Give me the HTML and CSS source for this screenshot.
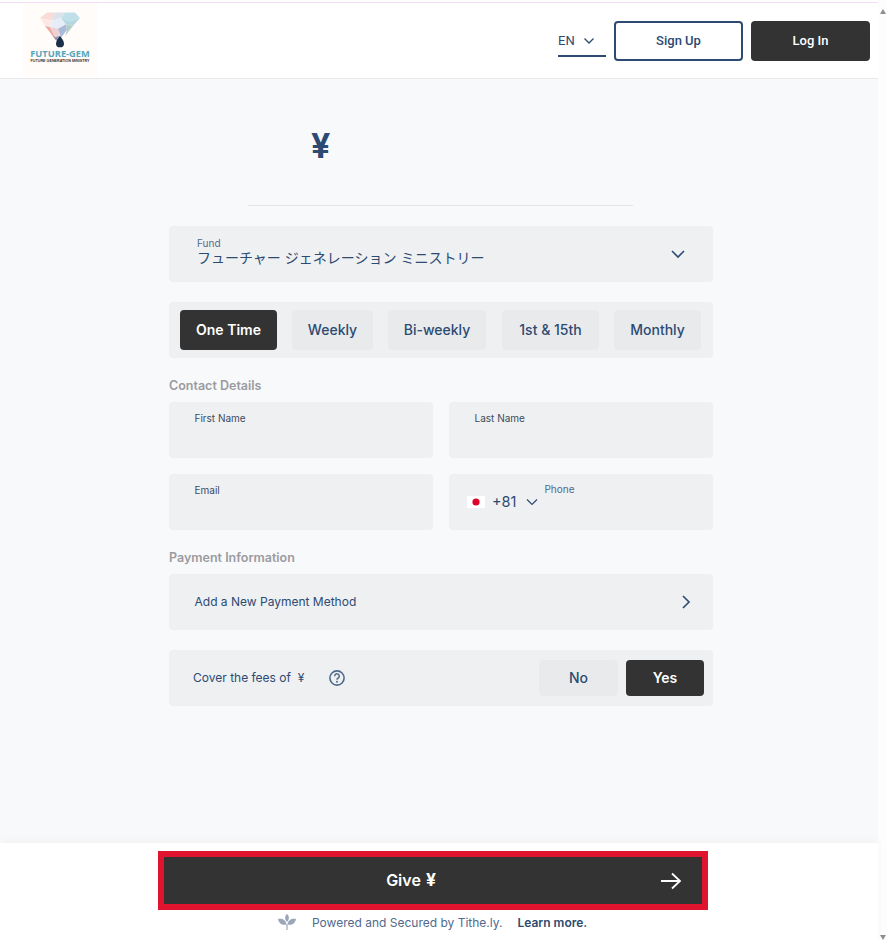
FILE: index.html
```html
<!DOCTYPE html>
<html lang="en">

<head>
    <meta charset="UTF-8">
    <meta name="viewport" content="width=device-width, initial-scale=1.0">
    <title>Give</title>
    <link rel="stylesheet" href="styles.css">
</head>

<body>
    <div class="page">
        <header class="topbar">
            <svg class="logo" width="75" height="74" viewBox="0 0 75 74">
                <rect width="75" height="74" fill="#fffcfa"/>
                <g class="logo-gem" transform="translate(0 1.500) scale(1 .9)">
                    <polygon points="17,15 24,9 32,9 29,18" fill="#f9dcd8"/>
                    <polygon points="32,9 42,9 38,15 29,18" fill="#dbe2ea"/>
                    <polygon points="42,9 52,9 57,15 47,19 38,15" fill="#bfe0e9"/>
                    <polygon points="17,15 29,18 27,25 22,24" fill="#fde8e5"/>
                    <polygon points="29,18 38,15 43,22 35,27 27,25" fill="#e7edf6"/>
                    <polygon points="38,15 47,19 57,15 50,24 43,22" fill="#b3d8e2"/>
                    <polygon points="22,24 27,25 32,36 29,34" fill="#eea9a4"/>
                    <polygon points="27,25 35,27 37,35 32,36" fill="#efd1d4"/>
                    <polygon points="35,27 43,22 44,28 38,37" fill="#a9bbd8"/>
                    <polygon points="43,22 50,24 42,35 44,28" fill="#b4cdc8"/>
                    <polygon points="29,34 32,36 37,40 33,40" fill="#a38a99"/>
                    <polygon points="32,36 37,35 38,37 37,44" fill="#8d99b4"/>
                    <path d="M37 35c2 3 4 5.500 4 8.500a4 4 0 0 1-8 0c0-3 2-5.500 4-8.500z" fill="#1b2f4a"/>
                </g>
                <text class="logo-name" x="37" y="54" text-anchor="middle">FUTURE-GEM</text>
                <text class="logo-sub" x="37" y="59" text-anchor="middle">FUTURE GENERATION MINISTRY</text>
            </svg>
            <div class="topbar-actions">
                <div class="lang">
                    <span>EN</span>
                    <svg width="12" height="8" viewBox="0 0 12 8"><path d="M1.500 1.500 6 6l4.500-4.500" fill="none" stroke="#2c4a72" stroke-width="1.300"/></svg>
                </div>
                <a class="btn-signup">Sign Up</a>
                <a class="btn-login">Log In</a>
            </div>
        </header>

        <main class="content">
            <div class="amount"><span>¥</span></div>

            <div class="box fund">
                <div class="fund-text">
                    <div class="fund-label">Fund</div>
                    <div class="fund-value">フューチャー ジェネレーション ミニストリー</div>
                </div>
                <svg width="16" height="10" viewBox="0 0 16 10"><path d="M2 2l6 6 6-6" fill="none" stroke="#2c4a72" stroke-width="1.600"/></svg>
            </div>

            <div class="box freq">
                <a class="freq-item active w-one">One Time</a>
                <a class="freq-item w-weekly">Weekly</a>
                <a class="freq-item w-bi">Bi-weekly</a>
                <a class="freq-item w-first">1st &amp; 15th</a>
                <a class="freq-item w-monthly">Monthly</a>
            </div>

            <h4 class="section-title contact-title">Contact Details</h4>
            <div class="fields">
                <div class="box field"><label>First Name</label></div>
                <div class="box field"><label>Last Name</label></div>
                <div class="box field"><label>Email</label></div>
                <div class="box field phone">
                    <svg class="flag" width="18" height="12" viewBox="0 0 18 12">
                        <rect width="18" height="12" fill="#fff"/>
                        <circle cx="9" cy="6" r="3.600" fill="#e0002a"/>
                    </svg>
                    <span class="dial">+81</span>
                    <svg class="dial-caret" width="12" height="8" viewBox="0 0 12 8"><path d="M1 1.500l5 5 5-5" fill="none" stroke="#2c4a72" stroke-width="1.200"/></svg>
                    <label class="phone-label">Phone</label>
                </div>
            </div>

            <h4 class="section-title payment-title">Payment Information</h4>
            <div class="box payment">
                <span>Add a New Payment Method</span>
                <svg width="10" height="16" viewBox="0 0 10 16"><path d="M2 2l6 6-6 6" fill="none" stroke="#2c4a72" stroke-width="1.600"/></svg>
            </div>

            <div class="box fees">
                <span class="fees-text">Cover the fees of&nbsp; ¥</span>
                <svg class="help" width="16" height="16" viewBox="0 0 16 16">
                    <circle cx="8" cy="8" r="7.100" fill="none" stroke="#4f6a8d" stroke-width="1.600"/>
                    <path d="M5.700 6.200a2.300 2.300 0 1 1 3.600 1.800c-.9.500-1.300.9-1.300 1.700" fill="none" stroke="#4f6a8d" stroke-width="1.500"/>
                    <circle cx="8" cy="11.800" r="1" fill="#4f6a8d"/>
                </svg>
                <div class="fees-options">
                    <a class="fee-btn no">No</a>
                    <a class="fee-btn yes">Yes</a>
                </div>
            </div>
        </main>

        <footer class="bottom">
            <a class="give">
                <span>Give <span class="give-yen">¥</span></span>
                <svg class="give-arrow" width="22" height="18" viewBox="0 0 22 18"><path d="M1 9h19M12 1.500 20 9l-8 7.500" fill="none" stroke="#fff" stroke-width="1.800"/></svg>
            </a>
            <div class="powered">
                <svg width="18" height="16" viewBox="0 0 18 16">
                    <path d="M9 0c2.500 2 2.500 5.500 0 8-2.500-2.500-2.500-6 0-8z" fill="#9aa7bb"/>
                    <path d="M0 5c4-1 8 1 8.500 5.500C4.500 11.500 1 10 0 5zM18 5c-4-1-8 1-8.500 5.500 4 1 7.500-.500 8.500-5.500z" fill="#9aa7bb"/>
                    <path d="M9 10v6" stroke="#9aa7bb" stroke-width="1.200"/>
                </svg>
                <span class="powered-text">Powered and Secured by Tithe.ly.</span>
                <b>Learn more.</b>
            </div>
        </footer>
    </div>

    <div class="scrollbar">
        <span class="arrow-up"></span>
        <span class="arrow-down"></span>
    </div>
</body>

</html>
```

FILE: styles.css
```css
* {
    box-sizing: border-box;
}

html,
body {
    margin: 0;
    height: 100%;
    overflow: hidden;
}

body {
    display: flex;
    background-color: #fff;
    font-family: Inter, "Noto Sans CJK JP", sans-serif;
    color: #2c4a72;
}

.page {
    width: 878px;
    height: 940px;
    display: flex;
    flex-direction: column;
}

.topbar {
    flex: none;
    height: 77px;
    margin-top: 2px;
    border-top: 1px solid #f3dff5;
    border-bottom: 1px solid #e8e8ea;
    background-color: #fff;
    display: flex;
    justify-content: space-between;
    padding: 0 8px 0 23px;
}

.logo {
    display: block;
}

.logo-gem {
    filter: blur(0.7px);
}

.logo-name {
    font-family: "Open Sans", sans-serif;
    font-size: 9.300px;
    font-weight: 700;
    fill: #57a6bb;
}

.logo-sub {
    font-family: "Liberation Sans", sans-serif;
    font-size: 3.700px;
    font-weight: 700;
    fill: #333;
}

.topbar-actions {
    display: flex;
    align-items: flex-start;
    padding-top: 18px;
    font-family: Roboto, sans-serif;
}

.lang {
    width: 48px;
    height: 36px;
    margin-right: 8px;
    border-bottom: 2px solid #2c4a72;
    display: flex;
    align-items: center;
    gap: 8px;
    padding-top: 5px;
    font-size: 13px;
}

.btn-signup,
.btn-login {
    height: 40px;
    border-radius: 4px;
    display: flex;
    align-items: center;
    justify-content: center;
    font-size: 13px;
    font-weight: 500;
    padding-bottom: 1px;
}

.btn-signup {
    width: 129px;
    border: 2px solid #2c4a72;
    background-color: #fff;
    margin-right: 8px;
}

.btn-login {
    width: 119px;
    background-color: #333;
    color: #fff;
}

.content {
    flex: 1;
    background-color: #f8f9fb;
    padding: 0 165px 0 169px;
}

.amount {
    width: 385px;
    height: 127px;
    margin-left: 79px;
    border-bottom: 1px solid #e4e5e8;
    padding: 45px 0 0 63px;
    font-size: 34px;
    font-weight: 700;
    line-height: 44px;
    margin-bottom: 20px;
}

.box {
    background-color: #eff0f2;
    border-radius: 4px;
}

.fund {
    height: 56px;
    display: flex;
    align-items: center;
    justify-content: space-between;
    padding: 0 27px 0 28px;
}

.fund-text {
    align-self: flex-start;
    padding-top: 11px;
}

.fund-label {
    font-size: 10px;
    line-height: 12px;
    color: #4f6a8d;
}

.fund-value {
    font-size: 14px;
    line-height: 17px;
}

.freq {
    height: 56px;
    margin-top: 20px;
    padding: 8px 12px 8px 11px;
    display: flex;
    gap: 15px;
}

.freq-item {
    height: 40px;
    border-radius: 4px;
    background-color: #e9eaec;
    display: flex;
    align-items: center;
    justify-content: center;
    padding-bottom: 1px;
    font-size: 14px;
    font-weight: 500;
}

.freq-item.active {
    background-color: #333;
    color: #fff;
    font-weight: 600;
}

.w-one { width: 97px; }
.w-weekly { width: 81px; }
.w-bi { width: 98px; margin-right: 1px; }
.w-first { width: 97px; }
.w-monthly { width: 87px; }

.section-title {
    margin: 0;
    font-size: 12.500px;
    font-weight: 600;
    line-height: 16px;
    color: #9b9b9f;
}

.contact-title {
    margin-top: 20px;
}

.fields {
    margin-top: 8px;
    display: grid;
    grid-template-columns: 264px 264px;
    gap: 16px;
}

.field {
    height: 56px;
    padding: 10px 26px 10px 25.500px;
}

.field label {
    display: block;
    font-size: 10px;
    line-height: 13px;
    color: #3c4a5c;
}

.phone {
    display: flex;
    align-items: flex-start;
    padding: 0 0 0 18px;
}

.flag {
    flex: none;
    margin-top: 22px;
}

.dial {
    margin: 18px 0 0 7px;
    font-size: 14.500px;
    line-height: 20px;
}

.dial-caret {
    margin: 24px 0 0 10px;
}

.field .phone-label {
    margin: 9px 0 0 6px;
    color: #4f6a8d;
}

.payment-title {
    margin-top: 20px;
}

.payment {
    height: 56px;
    margin-top: 8px;
    padding: 0 22px 0 25.500px;
    display: flex;
    align-items: center;
    justify-content: space-between;
    font-size: 12px;
}

.payment span {
    margin-bottom: 1px;
}

.fees {
    height: 56px;
    margin-top: 20px;
    padding: 0 9px 0 24px;
    display: flex;
    align-items: center;
    font-size: 12px;
}

.fees-text {
    margin-bottom: 1px;
}

.help {
    margin-left: 25px;
}

.fees-options {
    margin-left: auto;
    display: flex;
    gap: 8px;
}

.fee-btn {
    height: 36px;
    border-radius: 4px;
    display: flex;
    align-items: center;
    justify-content: center;
    padding-bottom: 1px;
    font-size: 14px;
    font-weight: 500;
}

.fee-btn.no {
    width: 79px;
    background-color: #e9eaec;
}

.fee-btn.yes {
    width: 78px;
    background-color: #333;
    color: #fff;
    font-weight: 600;
}

.bottom {
    flex: none;
    height: 97px;
    background-color: #fff;
    padding: 8px 0 0 158px;
    position: relative;
    box-shadow: 0 -3px 8px rgba(0, 0, 0, 0.03);
}

.give {
    width: 550px;
    height: 59px;
    border: 6px solid #e0142e;
    background-color: #333;
    color: #fff;
    display: flex;
    align-items: center;
    justify-content: center;
    position: relative;
    padding: 0 44px 2px 0;
    font-size: 16px;
    font-weight: 600;
}

.give-yen {
    margin-left: 1px;
    font-size: 17.500px;
    font-weight: 700;
    line-height: 1;
}

.give-arrow {
    position: absolute;
    right: 20px;
    top: 15px;
}

.powered {
    margin: 3px 0 0 120px;
    height: 18px;
    display: flex;
    align-items: center;
    font-size: 12px;
}

.powered-text {
    margin-left: 16px;
    color: #4f6a8d;
}

.powered b {
    margin-left: 15px;
    font-weight: 600;
}

.scrollbar {
    width: 9px;
    height: 940px;
    background-color: #fdfdfd;
    display: flex;
    flex-direction: column;
    justify-content: space-between;
    align-items: center;
    padding: 9px 0 0;
}

.arrow-up {
    border-left: 3px solid transparent;
    border-right: 3px solid transparent;
    border-bottom: 5px solid #8f8f8f;
}

.arrow-down {
    border-left: 3px solid transparent;
    border-right: 3px solid transparent;
    border-top: 5px solid #8f8f8f;
}
```
